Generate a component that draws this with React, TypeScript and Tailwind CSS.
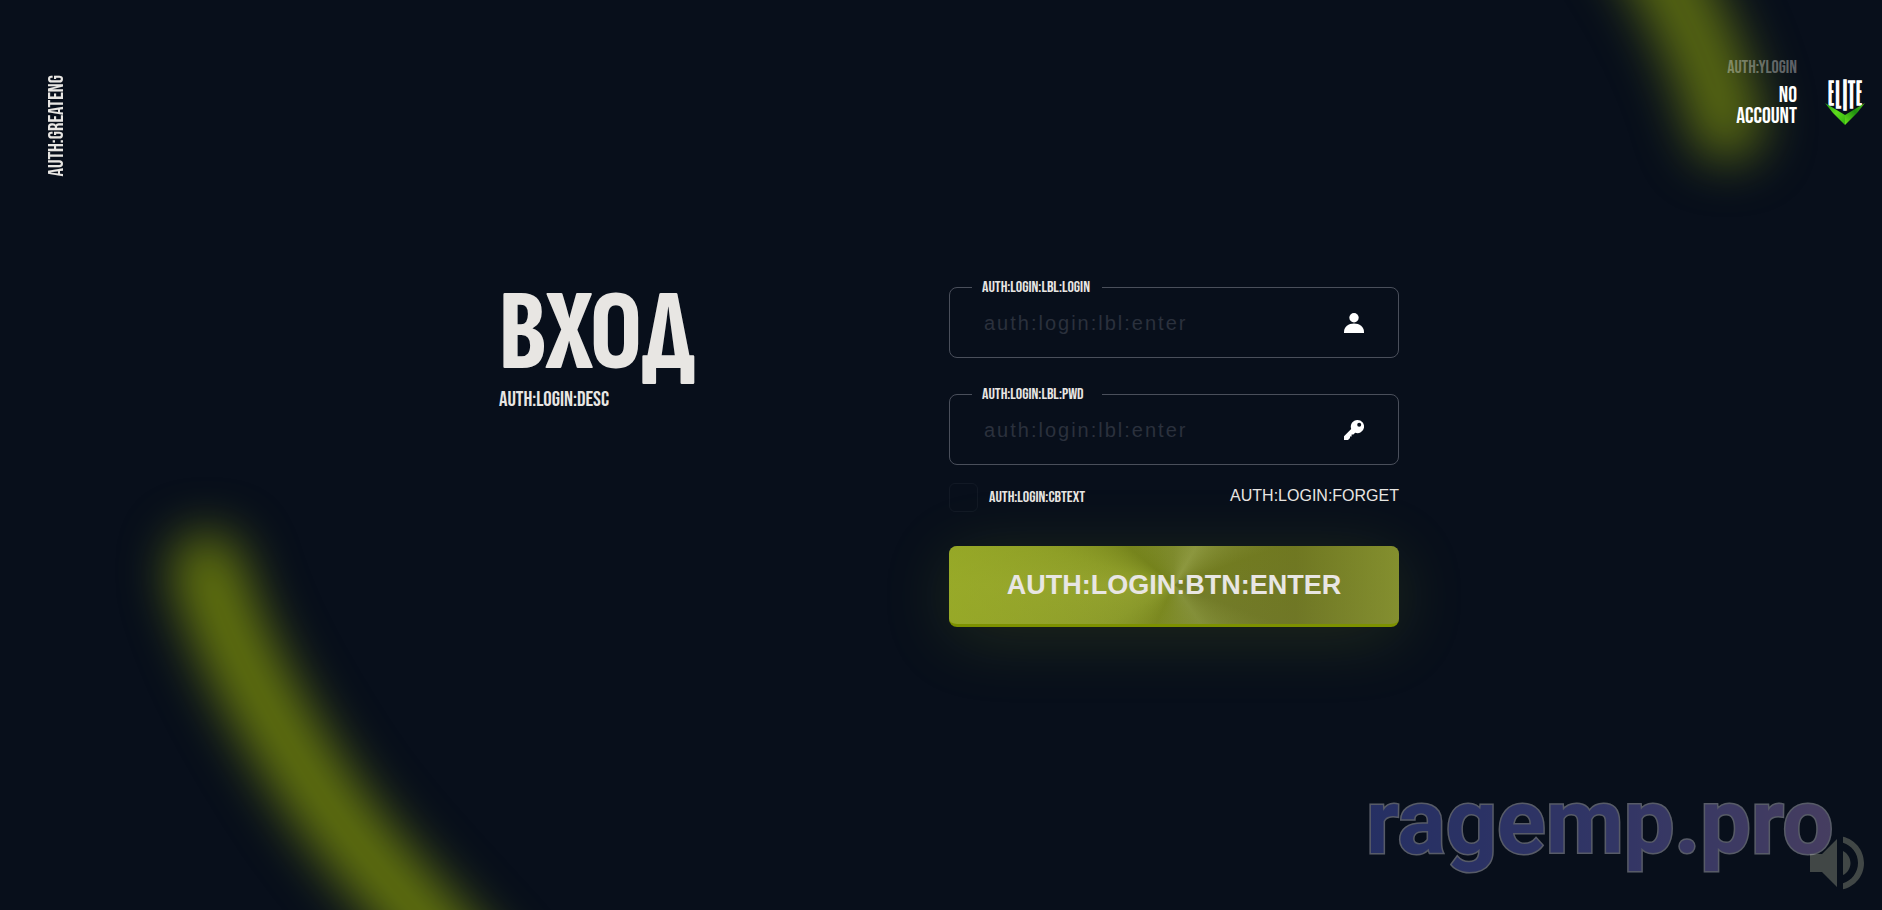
import React, { useState } from 'react';

function Glow() {
  return (
    <>
      <svg aria-hidden="true" className="pointer-events-none absolute bottom-0 left-0" width="620" height="520" viewBox="0 390 620 520">
        <defs>
          <filter id="glow-left" filterUnits="userSpaceOnUse" x="0" y="300" width="800" height="900" colorInterpolationFilters="sRGB">
            <feGaussianBlur stdDeviation="25" />
          </filter>
        </defs>
        <path d="M207 569 C226 640 266 710 311 780 S412 905 480 980" fill="none" stroke="#63740e" strokeWidth="72" strokeLinecap="round" filter="url(#glow-left)" />
      </svg>
      <svg aria-hidden="true" className="pointer-events-none absolute top-0 right-0" width="362" height="260" viewBox="1520 0 362 260">
        <defs>
          <filter id="glow-right" filterUnits="userSpaceOnUse" x="1400" y="-300" width="600" height="700" colorInterpolationFilters="sRGB">
            <feGaussianBlur stdDeviation="25" />
          </filter>
        </defs>
        <path d="M1610 -110 Q1702 20 1727 125" fill="none" stroke="#596912" strokeWidth="72" strokeLinecap="round" filter="url(#glow-right)" />
      </svg>
    </>
  );
}

function Logo() {
  return (
    <svg role="img" aria-label="ELITE" className="overflow-visible" width="40" height="48" viewBox="0 0 40 48">
      <defs>
        <linearGradient id="arm-left" x1="0" y1="0" x2="1" y2="1">
          <stop offset="0" stopColor="#1f9a12" />
          <stop offset="0.5" stopColor="#5fdc1c" />
          <stop offset="1" stopColor="#2fb40f" />
        </linearGradient>
        <linearGradient id="arm-right" x1="1" y1="0" x2="0" y2="1">
          <stop offset="0" stopColor="#4fc01c" />
          <stop offset="0.45" stopColor="#1f8f10" />
          <stop offset="1" stopColor="#6be61c" />
        </linearGradient>
      </defs>
      <g fill="#ffffff" stroke="#ffffff" strokeWidth="1.3" textAnchor="middle" className="font-['Six_Caps','Bebas_Neue','Roboto_Condensed',sans-serif]">
        <text x="6" y="26" fontSize="29">E</text>
        <text x="13.5" y="29" fontSize="32">L</text>
        <text x="20" y="31" fontSize="35">I</text>
        <text x="26.5" y="29" fontSize="32">T</text>
        <text x="34" y="26" fontSize="29">E</text>
      </g>
      <path d="M0 24 L20 36 V46 L8 34 Z" fill="url(#arm-left)" />
      <path d="M40 24 L20 36 V46 L32 34 Z" fill="url(#arm-right)" />
    </svg>
  );
}

function UserIcon() {
  return (
    <svg aria-hidden="true" width="20" height="20" viewBox="0 0 20 20" fill="#ffffff">
      <circle cx="10" cy="4.7" r="4.7" />
      <path d="M0 20 V19 C0 14 4.5 10.6 10 10.6 S20 14 20 19 V20 Z" />
    </svg>
  );
}

function KeyIcon() {
  return (
    <svg aria-hidden="true" width="20" height="20" viewBox="0 0 20 20" fill="#ffffff" fillRule="evenodd">
      <path d="M13.4 0 A6.6 6.6 0 1 1 11.2 12.8 L9.4 14.5 H7.6 V16.4 H6 V18 L4 20 H0 V16.2 L7.2 8.9 A6.6 6.6 0 0 1 13.4 0 Z M15.2 2.8 A2 2 0 1 0 15.2 6.8 A2 2 0 1 0 15.2 2.8 Z" />
    </svg>
  );
}

type FieldProps = {
  id: string;
  label: string;
  type: string;
  value: string;
  onChange: (value: string) => void;
  children: React.ReactNode;
};

function Field({ id, label, type, value, onChange, children }: FieldProps) {
  return (
    <fieldset className="h-20 min-w-0 rounded-lg border border-[#4a4f5b] pr-[34px] pl-[22px]">
      <legend className="w-[130px] px-[10px] pt-px text-base leading-[18px] text-[#e8e6e3]">
        <label htmlFor={id}>{label}</label>
      </legend>
      <div className="flex h-[52px] items-center font-['Liberation_Sans',Arial,sans-serif]">
        <input
          id={id}
          type={type}
          value={value}
          onChange={(e) => onChange(e.target.value)}
          placeholder="auth:login:lbl:enter"
          className="min-w-0 flex-1 bg-transparent px-3 text-xl tracking-widest text-white outline-none placeholder:text-[#2b313d]"
        />
        {children}
      </div>
    </fieldset>
  );
}

function Watermark() {
  return (
    <div className="pointer-events-none absolute right-0 bottom-0 h-40 w-[540px]">
      <svg aria-hidden="true" className="absolute right-[9px] bottom-[11px]" width="72" height="72" viewBox="0 0 24 24" fill="#414746">
        <path d="M3 9v6h4l5 5V4L7 9H3zm13.500 3c0-1.770-1.020-3.290-2.500-4.030v8.050c1.480-.730 2.500-2.250 2.500-4.020zM14 3.230v2.060c2.890.860 5 3.540 5 6.710s-2.110 5.850-5 6.710v2.060c4.010-.910 7-4.490 7-8.770s-2.990-7.860-7-8.770z" />
      </svg>
      <svg className="absolute inset-0" width="540" height="160" viewBox="0 0 540 160">
        <defs>
          <linearGradient id="mark" x1="0" y1="0" x2="1" y2="0">
            <stop offset="0" stopColor="#5361d0" />
            <stop offset="0.5" stopColor="#6f6fd6" />
            <stop offset="1" stopColor="#a384c8" />
          </linearGradient>
        </defs>
        <text x="24" y="103" fontSize="90" fontWeight="700" fill="url(#mark)" stroke="#cdcdd8" strokeWidth="3" paintOrder="stroke" opacity="0.4" className="font-['Roboto',sans-serif]">
          ragemp.pro
        </text>
      </svg>
    </div>
  );
}

export default function App() {
  const [login, setLogin] = useState('');
  const [password, setPassword] = useState('');
  const [remember, setRemember] = useState(false);

  return (
    <div className="relative flex min-h-screen flex-col overflow-hidden bg-[#080f1b] font-['Bebas_Neue','Oswald','Roboto_Condensed',sans-serif] text-[#e8e6e3]">
      <Glow />
      <Watermark />
      <header className="relative flex h-[270px] items-start justify-between pr-[17px] pl-[45px]">
        <p className="mt-[75px] rotate-180 text-[21px] leading-6 [writing-mode:vertical-rl]">AUTH:GREATENG</p>
        <div className="mt-14 flex items-start gap-7">
          <div className="flex flex-col items-end gap-[5px] text-right">
            <p className="text-lg leading-6 text-white/35">AUTH:YLOGIN</p>
            <a href="#register" className="w-16 text-[22px] leading-[21px] text-white">NO ACCOUNT</a>
          </div>
          <div className="mt-[23px]">
            <Logo />
          </div>
        </div>
      </header>
      <main className="relative mx-auto grid w-[900px] max-w-full translate-x-2 grid-cols-2">
        <div className="pt-3">
          <h1 className="font-['Sofia_Sans_Extra_Condensed','Roboto_Condensed',sans-serif] text-[114px] leading-[104px] font-extrabold">ВХОД</h1>
          <p className="text-[21px] leading-7">AUTH:LOGIN:DESC</p>
        </div>
        <form className="pt-2" onSubmit={(e) => e.preventDefault()}>
          <div className="flex flex-col gap-[27px]">
            <Field id="login" label="AUTH:LOGIN:LBL:LOGIN" type="text" value={login} onChange={setLogin}>
              <UserIcon />
            </Field>
            <Field id="password" label="AUTH:LOGIN:LBL:PWD" type="password" value={password} onChange={setPassword}>
              <KeyIcon />
            </Field>
          </div>
          <div className="mt-[18px] flex items-center justify-between">
            <label className="flex items-center gap-[11px] text-base leading-4">
              <input
                type="checkbox"
                checked={remember}
                onChange={(e) => setRemember(e.target.checked)}
                className="size-[29px] appearance-none rounded-md border border-[#121925] checked:bg-[#9bad27]"
              />
              <span>AUTH:LOGIN:CBTEXT</span>
            </label>
            <a href="#forget" className="mb-1 font-['Liberation_Sans',Arial,sans-serif] text-base leading-5">AUTH:LOGIN:FORGET</a>
          </div>
          <button
            type="submit"
            className="mt-[34px] h-[81px] w-full rounded-lg border-b-[3px] border-[#7d9100] bg-[linear-gradient(90deg,rgba(155,175,36,0.6)_0%,rgba(155,175,36,0)_40%,rgba(92,92,28,0.25)_77%,rgba(146,158,56,0.5)_100%),conic-gradient(from_0deg_at_50%_50%,#818e2e_0deg,#919d42_30deg,#768122_70deg,#76802a_110deg,#88953c_145deg,#7c8a20_205deg,#8b9a2b_240deg,#93a12f_270deg,#8b9a28_285deg,#76841c_310deg,#818e2e_360deg)] font-['Liberation_Sans',Arial,sans-serif] text-[27px] font-bold shadow-[0_10px_70px_rgba(159,184,34,0.16)]"
          >
            AUTH:LOGIN:BTN:ENTER
          </button>
        </form>
      </main>
    </div>
  );
}
